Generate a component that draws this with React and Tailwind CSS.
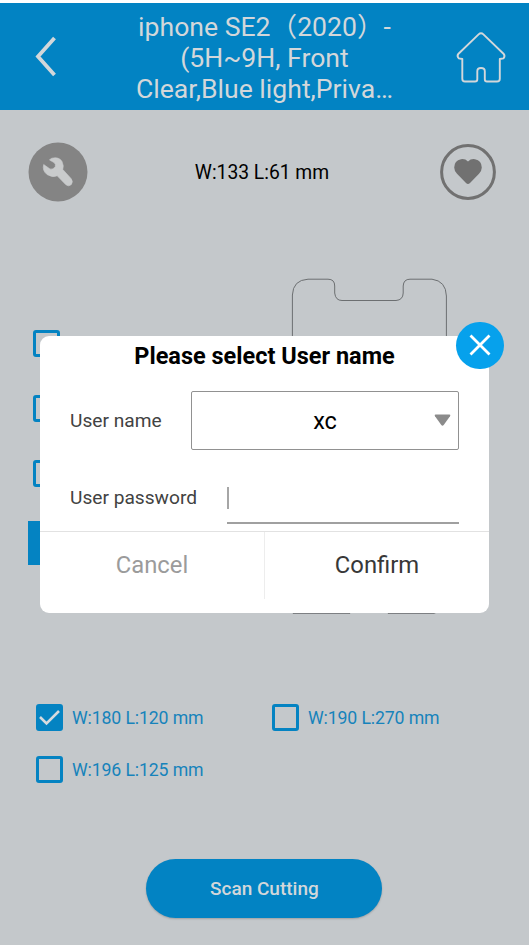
import React from "react";

function Box({ checked = false }) {
  return (
    <span
      className={
        "flex size-[27px] shrink-0 items-center justify-center rounded-[3px] border-[3px] border-[#0483c2] " +
        (checked ? "bg-[#0483c2]" : "")
      }
    >
      {checked && (
        <svg viewBox="0 0 21 18" className="h-[18px] w-[21px] shrink-0" fill="none">
          <path d="M1 8 L7.5 14.5 L20 2" stroke="#d5dade" strokeWidth="2.6" />
        </svg>
      )}
    </span>
  );
}

function SizeOption({ label, checked }) {
  return (
    <label className="flex h-[27px] w-[236px] items-center gap-[9px]">
      <Box checked={checked} />
      <span className="pt-[2px] whitespace-nowrap text-[17.7px] leading-[21px] tracking-[-0.13px] text-[#1683bb]">{label}</span>
    </label>
  );
}

function Header() {
  return (
    <header className="flex h-[107px] bg-[#0283c3] text-[#d3d7da]">
      <svg viewBox="0 0 60 107" className="h-[107px] w-[60px]" fill="none">
        <path d="M54.5 35 L38 53.5 L54.5 72" stroke="currentColor" strokeWidth="3.8" />
      </svg>
      <h1 className="flex flex-1 flex-col items-center pt-[8px] pl-[19px] text-[26.6px] leading-[31px] font-normal">
        <span className="whitespace-pre">iphone SE2（2020）-</span>
        <span className="whitespace-pre">(5H~9H, Front</span>
        <span className="whitespace-pre">Clear,Blue light,Priva…</span>
      </h1>
      <svg viewBox="0 0 79 107" className="h-[107px] w-[79px]" fill="none">
        <path
          d="M28.6 31.4 Q31 29.2 33.4 31.4 L53.5 50.7 Q55.5 53.2 53.5 55.4 L49.8 56 V75.7 Q49.8 78.5 47 78.5 H37 Q34.8 78.5 34.8 76.2 V68.2 Q34.8 65 31 65 Q27.3 65 27.3 68.2 V76.2 Q27.3 78.5 25 78.5 H15 Q12.3 78.5 12.3 75.7 V56 L8.8 55.4 Q6.5 53.2 8.5 50.7 Z"
          stroke="currentColor"
          strokeWidth="1.9"
          strokeLinejoin="round"
        />
      </svg>
    </header>
  );
}

function Toolbar() {
  return (
    <div className="flex items-center justify-between pt-[32px] pr-[33px] pl-[28px]">
      <svg viewBox="0 0 60 60" className="size-[60px]">
        <circle cx="30" cy="30" r="29.5" fill="#848484" />
        <path
          d="M24 16.2 Q31 14.5 34 19.5 Q36 23.5 34.8 27.5 L43 36.5 Q45.5 39.5 43.3 42.6 Q40.5 45 37.7 42.6 L29.2 33.8 Q24 36 19 32.5 Q14 28.5 15.7 22.5 L22 27 Q25 28 27.3 24.8 Q28 22 26 20.5 L21.5 18 Q22.3 16.6 24 16.2 Z"
          fill="#c9cbcc"
          stroke="#c9cbcc"
          strokeWidth="0.6"
          strokeLinejoin="round"
        />
      </svg>
      <p className="w-[140px] pt-[2px] pr-[4px] text-center text-[19.3px] leading-[22px] whitespace-nowrap text-black">
        W:133 L:61 mm
      </p>
      <svg viewBox="0 0 56 56" className="size-[56px]">
        <circle cx="28" cy="28" r="26.4" fill="none" stroke="#717171" strokeWidth="3" />
        <path
          d="M28 17.5 Q31 14.5 35 15.2 Q41.7 16.5 41.8 23.5 Q41.7 27 39 29.8 L30 39 Q28 41 26 39 L17 29.8 Q14.3 27 14.2 23.5 Q14.3 16.5 21 15.2 Q25 14.5 28 17.5 Z"
          fill="#717171"
        />
      </svg>
    </div>
  );
}

function Preview() {
  return (
    <div className="flex h-[335px] justify-between pr-[81px] pl-[28px]">
      <div className="flex flex-col">
        <div className="flex flex-col gap-[38px] pl-[5px]">
          <Box />
          <Box />
          <Box />
        </div>
        <div className="mt-[34px] h-[44px] w-[80px] bg-[#0483c2]" />
      </div>
      <svg viewBox="0 0 158 340" className="-mt-[53px] h-[340px] w-[158px]" fill="none">
        <path
          d="M3 336.3 L2.4 320 V18 Q3 3 18 2.2 H38 Q44.7 2.2 44.7 9 V16 Q45.5 23.5 52 23.5 H106 Q113 23 113.2 16 V9 Q113.5 2.2 120 2.2 H142 Q156 4 156.4 19 V320 Q154 334 144 336.3 H98 L90 320 H70 L60 336.3 Z"
          stroke="#6c6f71"
          strokeWidth="1"
        />
      </svg>
    </div>
  );
}

function Dialog() {
  return (
    <section
      role="dialog"
      className="absolute top-[336px] left-[40px] flex h-[277px] w-[449px] flex-col rounded-[9px] bg-white"
    >
      <h2 className="pt-[6px] text-center text-[23.5px] leading-[28px] font-bold whitespace-nowrap text-black">
        Please select User name
      </h2>
      <div className="mt-[21px] flex h-[59px] items-center pr-[30px] pl-[30px] text-[19.15px] text-[#424242]">
        <span className="w-[121px] pt-[2px] whitespace-nowrap">User name</span>
        <div className="flex h-[59px] w-[268px] items-center justify-end rounded-[2px] border border-[#919191] pr-[7px]">
          <span className="flex-1 pt-[3px] pl-[24px] text-center text-[23.5px] text-black">xc</span>
          <svg viewBox="0 0 17 13" className="h-[13px] w-[17px]">
            <path d="M1.5 .5 H15.5 Q17 .8 16 2.2 L9.7 11 Q8.5 12.5 7.3 11 L1 2.2 Q0 .8 1.5 .5Z" fill="#8b8b8b" />
          </svg>
        </div>
      </div>
      <div className="flex h-[81px] pt-[34px] pl-[30px] text-[19.15px] text-[#424242]">
        <span className="w-[157px] pt-[3px] leading-[22px] whitespace-nowrap">User password</span>
        <div className="h-[40px] w-[232px] border-b-2 border-[#a0a0a0] pt-[3px]">
          <div className="h-[22px] w-[2px] bg-[#a6a6a6]" />
        </div>
      </div>
      <div className="flex h-[68px] border-t border-[#e2e2e2] text-[23.8px] leading-[64px]">
        <button className="flex-1 border-r border-[#ededed] pb-[2px] text-[#9b9b9b]">Cancel</button>
        <button className="flex-1 pb-[2px] text-[#383838]">Confirm</button>
      </div>
      <button
        aria-label="Close"
        className="absolute -top-[14.5px] -right-[14.5px] flex size-[47.5px] items-center justify-center rounded-full bg-[#06a1ec]"
      >
        <svg viewBox="0 0 22 22" className="size-[22px]" fill="none">
          <path d="M1.5 1.5 L20.5 20.5 M20.5 1.5 L1.5 20.5" stroke="white" strokeWidth="2.8" />
        </svg>
      </button>
    </section>
  );
}

export default function App() {
  return (
    <main className="relative h-[945px] w-[529px] overflow-hidden bg-white pt-[3px] font-['Roboto','Noto_Sans_CJK_SC',sans-serif]">
      <Header />
      <div className="flex h-[835px] flex-col bg-[#c4c8cb]">
        <Toolbar />
        <div className="h-[128px] shrink-0" />
        <Preview />
        <div className="mt-[39px] ml-[36px] flex w-[472px] flex-wrap gap-y-[25px]">
          <SizeOption label="W:180 L:120 mm" checked />
          <SizeOption label="W:190 L:270 mm" />
          <SizeOption label="W:196 L:125 mm" />
        </div>
        <button className="mt-[75.5px] ml-[146.4px] h-[59px] w-[236px] rounded-full bg-[#0283c3] pt-[2px] text-[19px] font-medium text-[#d3d7da] shadow-[0_1px_2px_rgba(0,0,0,0.2)]">
          Scan Cutting
        </button>
      </div>
      <Dialog />
    </main>
  );
}
